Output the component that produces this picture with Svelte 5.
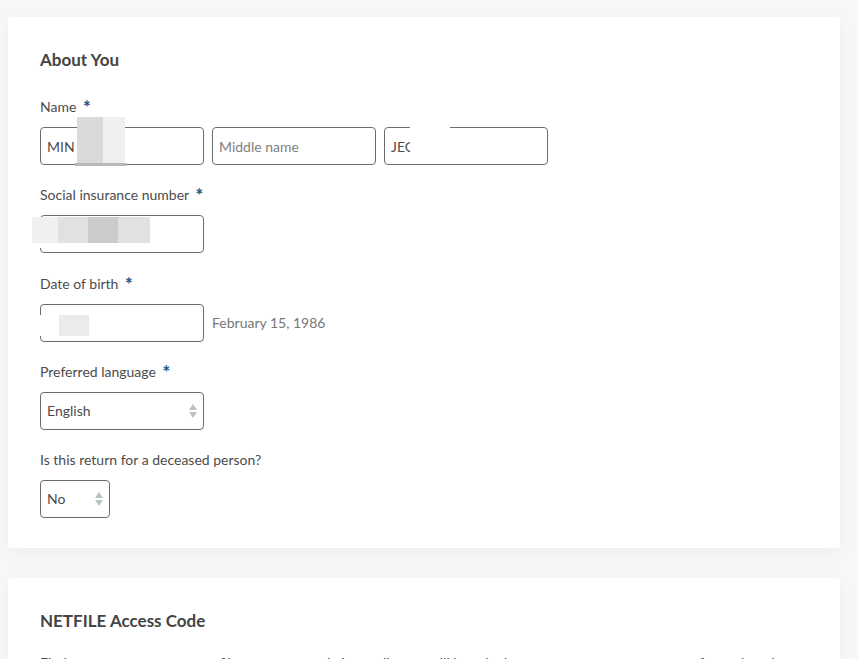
<script>
let firstName = $state("MIN");
let middleName = $state("");
let lastName = $state("JEO");
let sin = $state("");
let birthDate = $state("");
let language = $state("English");
let deceased = $state("No");
</script>

{#snippet arrows()}
  <svg class="arrows" viewBox="0 0 8 14" aria-hidden="true">
    <path d="M4 0 L8 6 H0 Z M0 8 H8 L4 14 Z" />
  </svg>
{/snippet}

<main class="page">
  <section class="card">
    <h2>About You</h2>
    <form class="fields">
      <div class="field">
        <label for="first">Name <span class="star">*</span></label>
        <div class="row">
          <div class="control">
            <input id="first" type="text" bind:value={firstName} />
            <span class="mask mask-first"><i></i><i></i></span>
          </div>
          <div class="control">
            <input type="text" aria-label="Middle name" placeholder="Middle name" bind:value={middleName} />
          </div>
          <div class="control">
            <input type="text" aria-label="Last name" bind:value={lastName} />
            <span class="mask mask-last"></span>
          </div>
        </div>
      </div>

      <div class="field">
        <label for="sin">Social insurance number <span class="star">*</span></label>
        <div class="row">
          <div class="control">
            <input id="sin" type="text" bind:value={sin} />
            <span class="mask mask-sin"><i></i><i></i><i></i><i></i></span>
          </div>
        </div>
      </div>

      <div class="field spaced">
        <label for="birth">Date of birth <span class="star">*</span></label>
        <div class="row">
          <div class="control">
            <input id="birth" type="text" bind:value={birthDate} />
            <span class="mask mask-birth"><i></i></span>
          </div>
          <span class="hint">February 15, 1986</span>
        </div>
      </div>

      <div class="field">
        <label for="language">Preferred language <span class="star">*</span></label>
        <div class="row">
          <div class="control">
            <select id="language" bind:value={language}>
              <option>English</option>
              <option>French</option>
            </select>
            {@render arrows()}
          </div>
        </div>
      </div>

      <div class="field">
        <label for="deceased">Is this return for a deceased person?</label>
        <div class="row">
          <div class="control small">
            <select id="deceased" bind:value={deceased}>
              <option>No</option>
              <option>Yes</option>
            </select>
            {@render arrows()}
          </div>
        </div>
      </div>
    </form>
  </section>

  <section class="card">
    <h2>NETFILE Access Code</h2>
    <p>Find your most recent return file or on your code is usually, you will be asked to enter your own access note for each code</p>
  </section>
</main>

<style>
:global(body) {
  background: #f8f7f5;
}
:global(html) {
  scrollbar-width: none;
}
.page {
  display: flex;
  flex-direction: column;
  gap: 30px;
  padding: 17px 18px 0 8px;
  font-family: Lato, "Open Sans", sans-serif;
  font-size: 14px;
  line-height: 20px;
  color: #4c4c4c;
}
.card {
  padding: 31px 32px 30px;
  background: #fff;
  border-radius: 4px;
  box-shadow: 0 4px 16px rgba(0, 0, 0, 0.04);
}
h2 {
  margin: 0 0 25px;
  font-size: 17px;
  line-height: 24px;
  font-weight: 700;
  color: #444;
}
p {
  margin: -5px 0 0;
}
.fields {
  display: flex;
  flex-direction: column;
  gap: 20px;
}
.field {
  display: flex;
  flex-direction: column;
  align-items: flex-start;
  gap: 10px;
}
.field.spaced {
  padding-top: 1px;
}
.star {
  margin-left: 3px;
  font-size: 18px;
  line-height: 16px;
  font-weight: 900;
  vertical-align: -2px;
  color: #1f5f8f;
}
.row {
  display: flex;
  align-items: center;
  gap: 8px;
}
.control {
  position: relative;
  width: 164px;
}
.control.small {
  width: 70px;
}
input,
select {
  display: block;
  box-sizing: border-box;
  width: 100%;
  height: 38px;
  margin: 0;
  padding: 0 6px;
  border: 1px solid #6b6b6b;
  border-radius: 4px;
  background: #fff;
  font: inherit;
  color: #4c4c4c;
  appearance: none;
}
input::placeholder {
  color: #808080;
  opacity: 1;
}
.hint {
  color: #777;
}
.arrows {
  position: absolute;
  top: 12px;
  right: 7px;
  width: 8px;
  height: 14px;
  fill: #bcc3c6;
  pointer-events: none;
}

/* blocks that hide the private values */
.mask {
  position: absolute;
  display: flex;
  background: #fff;
}
.mask-first {
  top: -10px;
  left: 37px;
  width: 48px;
  height: 46px;
}
.mask-first::after {
  content: "";
  position: absolute;
  bottom: -3px;
  left: -2px;
  width: 52px;
  height: 3px;
  background: #b9b9b9;
}
.mask-first i {
  width: 26px;
  background: #dadada;
}
.mask-first i:last-child {
  width: 22px;
  background: #efefef;
}
.mask-last {
  top: -4px;
  left: 26px;
  width: 40px;
  height: 34px;
}
.mask-sin {
  top: 2px;
  left: -8px;
  width: 118px;
  height: 26px;
  padding-bottom: 5px;
  background: linear-gradient(#fff, #fff) 0 0 / 12px 100% no-repeat;
}
.mask-sin i {
  width: 30px;
  background: #e1e1e1;
}
.mask-sin i:first-child {
  width: 26px;
  background: #f0f0f0;
}
.mask-sin i:nth-child(3) {
  background: #cbcbcb;
}
.mask-sin i:last-child {
  width: 32px;
}
.mask-birth {
  top: 11px;
  left: -2px;
  width: 30px;
  height: 21px;
  padding-left: 21px;
}
.mask-birth i {
  width: 30px;
  background: #ebebeb;
}
</style>
